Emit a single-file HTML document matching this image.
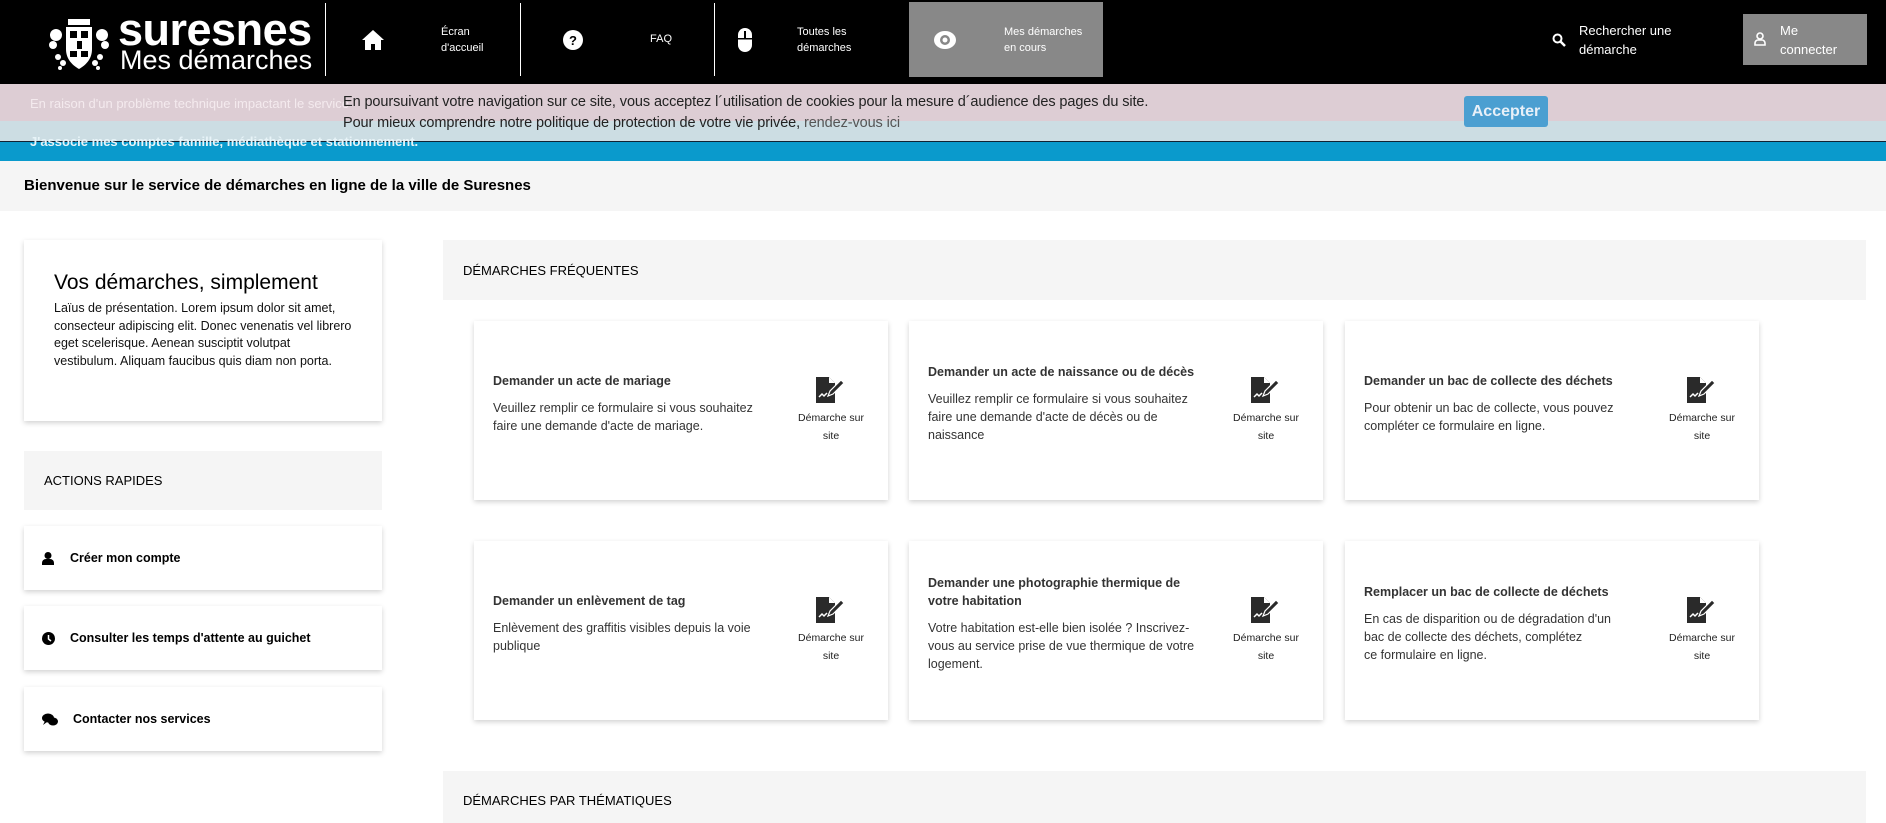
<!DOCTYPE html>
<html><head><meta charset="utf-8"><style>
*{margin:0;padding:0;box-sizing:border-box}
body{width:1886px;height:823px;overflow:hidden;background:#fff;font-family:"Liberation Sans",Arial,sans-serif;position:relative;color:#000}
.a{position:absolute}
.hdr{left:0;top:0;width:1886px;height:84px;background:#000}
.vl{width:1px;background:#fff;top:3px;height:73px}
.nt{color:#fff;font-size:11px;line-height:16px}
.card{position:absolute;background:#fff;box-shadow:0 2px 5px rgba(0,0,0,.18);}
.dc{width:414px;height:179px;display:flex;align-items:center}
.dc .t{width:325px;padding-left:19px;padding-bottom:14px;color:#333}
.dc .t b{display:block;font-size:12.5px;margin-bottom:9px;line-height:18px}
.dc .t p{font-size:12.5px;line-height:18px}
.dc .ic{position:absolute;left:316px;width:82px;text-align:center;top:50%;transform:translateY(-50%);font-size:10.5px;line-height:18px;color:#222}
.gray{background:#f5f5f5}
.act{left:24px;width:358px;height:64px;display:flex;align-items:center;padding-left:18px;font-size:12.5px;font-weight:bold}
</style></head><body>
<div class="a hdr"></div>
<svg class="a" style="left:48px;top:15px" width="62" height="58" viewBox="0 0 62 58">
<g fill="#fff"><circle cx="8" cy="20" r="6"/><circle cx="54" cy="20" r="6"/><circle cx="5" cy="30" r="4"/><circle cx="57" cy="30" r="4"/>
<circle cx="10" cy="42" r="3"/><circle cx="15" cy="48" r="3"/><circle cx="52" cy="42" r="3"/><circle cx="47" cy="48" r="3"/><circle cx="12" cy="53" r="2"/><circle cx="50" cy="53" r="2"/>
<rect x="20" y="4" width="22" height="6"/><path d="M18 12h26v22c0 10-6 16-13 20c-7-4-13-10-13-20z"/></g>
<g fill="#000"><rect x="22" y="16" width="7" height="7"/><rect x="33" y="16" width="7" height="7"/><rect x="29" y="26" width="5" height="8"/><rect x="22" y="36" width="7" height="6"/><rect x="33" y="36" width="7" height="6"/></g>
</svg>
<div class="a" style="left:118px;top:8px;color:#fff;font-size:45px;font-weight:bold;line-height:44px;letter-spacing:-0.5px">suresnes</div>
<div class="a" style="left:120px;top:46px;color:#fff;font-size:27px;line-height:28px">Mes démarches</div>
<div class="a vl" style="left:325px"></div>
<div class="a vl" style="left:520px"></div>
<div class="a vl" style="left:714px"></div>
<svg class="a" style="left:362px;top:30px" width="22" height="20" viewBox="0 0 22 20"><path fill="#fff" d="M11 0L0 10h3v10h6v-6h4v6h6V10h3z"/></svg>
<div class="a nt" style="left:441px;top:24px">Écran<br>d'accueil</div>
<svg class="a" style="left:563px;top:30px" width="20" height="20"><circle cx="10" cy="10" r="10" fill="#fff"/><text x="10" y="15" font-size="13" font-weight="bold" text-anchor="middle" font-family="Liberation Sans">?</text></svg>
<div class="a nt" style="left:650px;top:31px">FAQ</div>
<svg class="a" style="left:738px;top:28px" width="14" height="24"><rect x="0" y="0" width="14" height="24" rx="7" fill="#fff"/><rect x="6" y="3" width="2" height="7" fill="#000"/><rect x="0" y="10" width="14" height="1.5" fill="#000"/></svg>
<div class="a nt" style="left:797px;top:24px">Toutes les<br>démarches</div>
<div class="a" style="left:909px;top:2px;width:194px;height:75px;background:#888"></div>
<svg class="a" style="left:934px;top:30px" width="22" height="20"><ellipse cx="11" cy="10" rx="11" ry="9" fill="#fff"/><circle cx="11" cy="10" r="5" fill="#888"/><circle cx="11" cy="10" r="2.5" fill="#fff"/></svg>
<div class="a nt" style="left:1004px;top:24px">Mes démarches<br>en cours</div>
<svg class="a" style="left:1552px;top:33px" width="14" height="14"><circle cx="5.5" cy="5.5" r="4" stroke="#fff" stroke-width="2" fill="none"/><path d="M8.5 8.5L13 13" stroke="#fff" stroke-width="2.5"/></svg>
<div class="a" style="left:1579px;top:21px;color:#fff;font-size:13px;line-height:19px">Rechercher une<br>démarche</div>
<div class="a" style="left:1743px;top:14px;width:124px;height:51px;background:#888"></div>
<svg class="a" style="left:1754px;top:32px" width="12" height="14"><circle cx="6" cy="4" r="3" stroke="#fff" stroke-width="1.6" fill="none"/><path d="M1 13v-2a3 3 0 0 1 3-3h4a3 3 0 0 1 3 3v2z" stroke="#fff" stroke-width="1.6" fill="none"/></svg>
<div class="a" style="left:1780px;top:21px;color:#fff;font-size:13px;line-height:19px">Me<br>connecter</div>
<div class="a" style="left:0;top:84px;width:1886px;height:37px;background:#ddcdd4"></div>
<div class="a" style="left:0;top:121px;width:1886px;height:20px;background:#ccdde3"></div>
<div class="a" style="left:0;top:141px;width:1886px;height:1px;background:#123"></div>
<div class="a" style="left:0;top:142px;width:1886px;height:19px;background:#0a9acc"></div>
<div class="a" style="left:30px;top:96px;color:#f4eaee;font-size:13px">En raison d'un problème technique impactant le service</div>
<div class="a" style="left:30px;top:134px;color:#e8f4f8;font-size:13px;font-weight:bold">J'associe mes comptes famille, médiathèque et stationnement.</div>
<div class="a" style="left:343px;top:92px;font-size:14.5px;line-height:21px;color:#222;letter-spacing:-0.1px">En poursuivant votre navigation sur ce site, vous acceptez l´utilisation de cookies pour la mesure d´audience des pages du site.<br>Pour mieux comprendre notre politique de protection de votre vie privée, <span style="color:#555">rendez-vous ici</span></div>
<div class="a" style="left:1464px;top:96px;width:84px;height:31px;background:#4b9fd1;border-radius:3px;color:#e8f0f8;font-weight:bold;font-size:16px;line-height:31px;text-align:center">Accepter</div>
<div class="a gray" style="left:0;top:161px;width:1886px;height:50px"></div>
<div class="a" style="left:24px;top:177px;font-size:15px;font-weight:bold">Bienvenue sur le service de démarches en ligne de la ville de Suresnes</div>
<div class="card" style="left:24px;top:240px;width:358px;height:181px;padding:30px 0 0 30px">
<div style="font-size:21px;line-height:26px">Vos démarches, simplement</div>
<div style="font-size:12.5px;line-height:17.5px;margin-top:4px;width:320px;color:#111">Laïus de présentation. Lorem ipsum dolor sit amet,<br>consecteur adipiscing elit. Donec venenatis vel librero<br>eget scelerisque. Aenean susciptit volutpat<br>vestibulum. Aliquam faucibus quis diam non porta.</div></div>
<div class="a gray" style="left:24px;top:451px;width:358px;height:59px"></div>
<div class="a" style="left:44px;top:473px;font-size:13px">ACTIONS RAPIDES</div>
<div class="card act" style="top:526px"><svg width="12" height="13"><circle cx="6" cy="3.5" r="3.5"/><path d="M0 13v-2a4 4 0 0 1 4-4h4a4 4 0 0 1 4 4v2z"/></svg><span style="margin-left:16px">Créer mon compte</span></div>
<div class="card act" style="top:606px"><svg width="13" height="13"><circle cx="6.5" cy="6.5" r="6.5"/><path d="M6.5 3v4l2.5 2" stroke="#fff" stroke-width="1.5" fill="none"/></svg><span style="margin-left:15px">Consulter les temps d'attente au guichet</span></div>
<div class="card act" style="top:687px"><svg width="16" height="13"><ellipse cx="6" cy="5" rx="6" ry="4.5"/><ellipse cx="11" cy="8.5" rx="5" ry="4"/><path d="M1 12l2-4 2 1z"/></svg><span style="margin-left:15px">Contacter nos services</span></div>
<div class="a gray" style="left:443px;top:240px;width:1423px;height:60px"></div>
<div class="a" style="left:463px;top:263px;font-size:13px">DÉMARCHES FRÉQUENTES</div>
<div class="a gray" style="left:443px;top:771px;width:1423px;height:52px"></div>
<div class="a" style="left:463px;top:793px;font-size:13px">DÉMARCHES PAR THÉMATIQUES</div>

<div class="card dc" style="left:474px;top:321px"><div class="t"><b>Demander un acte de mariage</b><p>Veuillez remplir ce formulaire si vous souhaitez<br>faire une demande d'acte de mariage.</p></div><div class="ic"><svg width="30" height="26" viewBox="0 0 30 26"><path d="M0 0h13l6 6v20H0z" fill="#2a2a2a"/><path d="M13 0v6h6" fill="#fff"/><path d="M3 20l3-3 2 2 3-3" stroke="#fff" stroke-width="1.5" fill="none"/><path d="M12 19l2-5 11-11 3 3-11 11z" fill="#2a2a2a" stroke="#fff" stroke-width="1.2"/></svg><br>Démarche sur<br>site</div></div>
<div class="card dc" style="left:909px;top:321px"><div class="t"><b>Demander un acte de naissance ou de décès</b><p>Veuillez remplir ce formulaire si vous souhaitez<br>faire une demande d'acte de décès ou de<br>naissance</p></div><div class="ic"><svg width="30" height="26" viewBox="0 0 30 26"><path d="M0 0h13l6 6v20H0z" fill="#2a2a2a"/><path d="M13 0v6h6" fill="#fff"/><path d="M3 20l3-3 2 2 3-3" stroke="#fff" stroke-width="1.5" fill="none"/><path d="M12 19l2-5 11-11 3 3-11 11z" fill="#2a2a2a" stroke="#fff" stroke-width="1.2"/></svg><br>Démarche sur<br>site</div></div>
<div class="card dc" style="left:1345px;top:321px"><div class="t"><b>Demander un bac de collecte des déchets</b><p>Pour obtenir un bac de collecte, vous pouvez<br>compléter ce formulaire en ligne.</p></div><div class="ic"><svg width="30" height="26" viewBox="0 0 30 26"><path d="M0 0h13l6 6v20H0z" fill="#2a2a2a"/><path d="M13 0v6h6" fill="#fff"/><path d="M3 20l3-3 2 2 3-3" stroke="#fff" stroke-width="1.5" fill="none"/><path d="M12 19l2-5 11-11 3 3-11 11z" fill="#2a2a2a" stroke="#fff" stroke-width="1.2"/></svg><br>Démarche sur<br>site</div></div>
<div class="card dc" style="left:474px;top:541px"><div class="t"><b>Demander un enlèvement de tag</b><p>Enlèvement des graffitis visibles depuis la voie<br>publique</p></div><div class="ic"><svg width="30" height="26" viewBox="0 0 30 26"><path d="M0 0h13l6 6v20H0z" fill="#2a2a2a"/><path d="M13 0v6h6" fill="#fff"/><path d="M3 20l3-3 2 2 3-3" stroke="#fff" stroke-width="1.5" fill="none"/><path d="M12 19l2-5 11-11 3 3-11 11z" fill="#2a2a2a" stroke="#fff" stroke-width="1.2"/></svg><br>Démarche sur<br>site</div></div>
<div class="card dc" style="left:909px;top:541px"><div class="t"><b>Demander une photographie thermique de<br>votre habitation</b><p>Votre habitation est-elle bien isolée ? Inscrivez-<br>vous au service prise de vue thermique de votre<br>logement.</p></div><div class="ic"><svg width="30" height="26" viewBox="0 0 30 26"><path d="M0 0h13l6 6v20H0z" fill="#2a2a2a"/><path d="M13 0v6h6" fill="#fff"/><path d="M3 20l3-3 2 2 3-3" stroke="#fff" stroke-width="1.5" fill="none"/><path d="M12 19l2-5 11-11 3 3-11 11z" fill="#2a2a2a" stroke="#fff" stroke-width="1.2"/></svg><br>Démarche sur<br>site</div></div>
<div class="card dc" style="left:1345px;top:541px"><div class="t"><b>Remplacer un bac de collecte de déchets</b><p>En cas de disparition ou de dégradation d'un<br>bac de collecte des déchets, complétez<br>ce formulaire en ligne.</p></div><div class="ic"><svg width="30" height="26" viewBox="0 0 30 26"><path d="M0 0h13l6 6v20H0z" fill="#2a2a2a"/><path d="M13 0v6h6" fill="#fff"/><path d="M3 20l3-3 2 2 3-3" stroke="#fff" stroke-width="1.5" fill="none"/><path d="M12 19l2-5 11-11 3 3-11 11z" fill="#2a2a2a" stroke="#fff" stroke-width="1.2"/></svg><br>Démarche sur<br>site</div></div>
</body></html>
